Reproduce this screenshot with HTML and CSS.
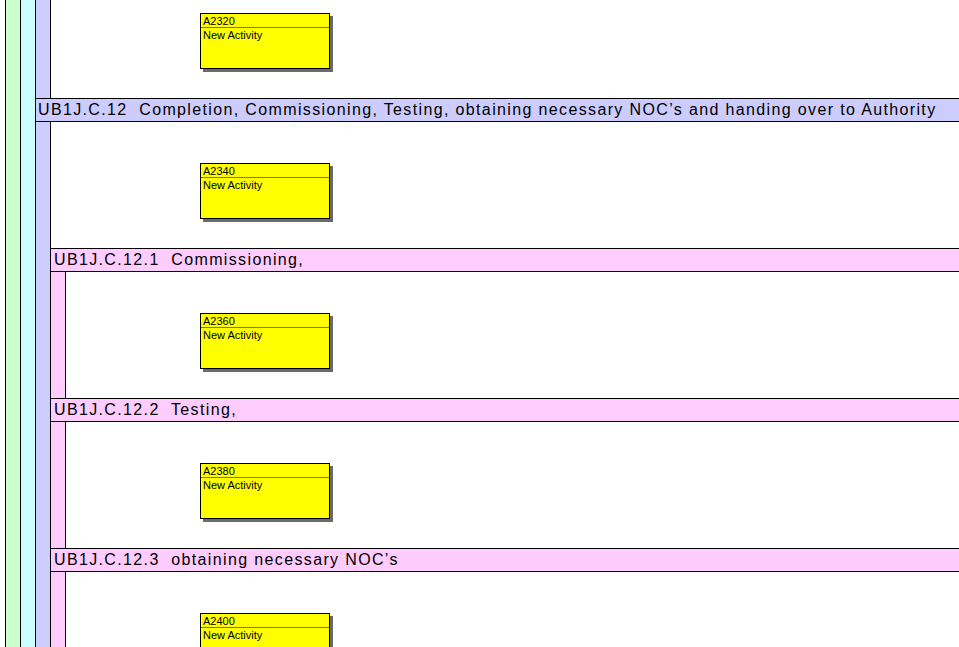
FILE: index.html
```html
<!DOCTYPE html>
<html>
<head>
<meta charset="utf-8">
<link rel="stylesheet" href="styles.css">
</head>
<body>
<div class="page">
  <div class="rail green"></div>
  <div class="rail cyan"></div>
  <div class="level">
    <div class="group">
      <div class="body">
        <div class="rail lav"></div>
        <div class="content">
          <div class="sect first l1">
            <div class="act"><div class="act-id">A2320</div><div class="act-name">New Activity</div></div>
          </div>
        </div>
      </div>
    </div>
    <div class="group">
      <div class="hdr lavh">UB1J.C.12  Completion, Commissioning, Testing, obtaining necessary NOC’s and handing over to Authority</div>
      <div class="body">
        <div class="rail lav"></div>
        <div class="content">
          <div class="sect l1">
            <div class="act"><div class="act-id">A2340</div><div class="act-name">New Activity</div></div>
          </div>
          <div class="group">
            <div class="hdr pinkh">UB1J.C.12.1  Commissioning,</div>
            <div class="body">
              <div class="rail pink"></div>
              <div class="content">
                <div class="sect l2">
                  <div class="act"><div class="act-id">A2360</div><div class="act-name">New Activity</div></div>
                </div>
              </div>
            </div>
          </div>
          <div class="group">
            <div class="hdr pinkh">UB1J.C.12.2  Testing,</div>
            <div class="body">
              <div class="rail pink"></div>
              <div class="content">
                <div class="sect l2">
                  <div class="act"><div class="act-id">A2380</div><div class="act-name">New Activity</div></div>
                </div>
              </div>
            </div>
          </div>
          <div class="group">
            <div class="hdr pinkh">UB1J.C.12.3  obtaining necessary NOC’s</div>
            <div class="body">
              <div class="rail pink"></div>
              <div class="content">
                <div class="sect l2">
                  <div class="act"><div class="act-id">A2400</div><div class="act-name">New Activity</div></div>
                </div>
              </div>
            </div>
          </div>
        </div>
      </div>
    </div>
  </div>
</div>
</body>
</html>
```
FILE: styles.css
```css
html, body {
  margin: 0;
  padding: 0;
  background: #fff;
  overflow: hidden;
}
.page {
  display: flex;
  height: 647px;
  padding-left: 5px;
  overflow: hidden;
  font-family: "Liberation Sans", Arial, sans-serif;
  color: #000;
}
.rail {
  flex: 0 0 14px;
  width: 14px;
  border-right: 1px solid #000;
}
.green { background: #ccffcc; border-left: 1px solid #000; }
.cyan { background: #ccffff; }
.lav { background: #ccccff; }
.pink { background: #ffccff; }
.level {
  flex: 1;
  display: flex;
  flex-direction: column;
  min-width: 0;
}
.group {
  display: flex;
  flex-direction: column;
}
.body {
  display: flex;
  flex: 1;
}
.content {
  flex: 1;
  display: flex;
  flex-direction: column;
  min-width: 0;
}
.hdr {
  height: 22px;
  line-height: 22px;
  border-top: 1px solid #000;
  border-bottom: 1px solid #000;
  font-size: 16px;
  letter-spacing: 1.36px;
  white-space: pre;
  overflow: hidden;
}
.lavh { background: #ccccff; padding-left: 2px; }
.pinkh { background: #ffccff; padding-left: 3px; }
.sect {
  height: 126px;
  box-sizing: border-box;
  padding-top: 41px;
}
.sect.first {
  height: 98px;
  padding-top: 13px;
}
.l1 { padding-left: 149px; }
.l2 { padding-left: 134px; }
.act {
  width: 128px;
  height: 54px;
  background: #ffff00;
  border: 1px solid #000;
  box-shadow: 3px 3px 0 #6a6a6a;
  font-size: 11px;
}
.act-id {
  height: 12px;
  padding-top: 1px;
  line-height: 13px;
  border-bottom: 1px solid #808000;
  padding-left: 2px;
}
.act-name {
  line-height: 13px;
  padding-top: 1px;
  padding-left: 2px;
}
```
